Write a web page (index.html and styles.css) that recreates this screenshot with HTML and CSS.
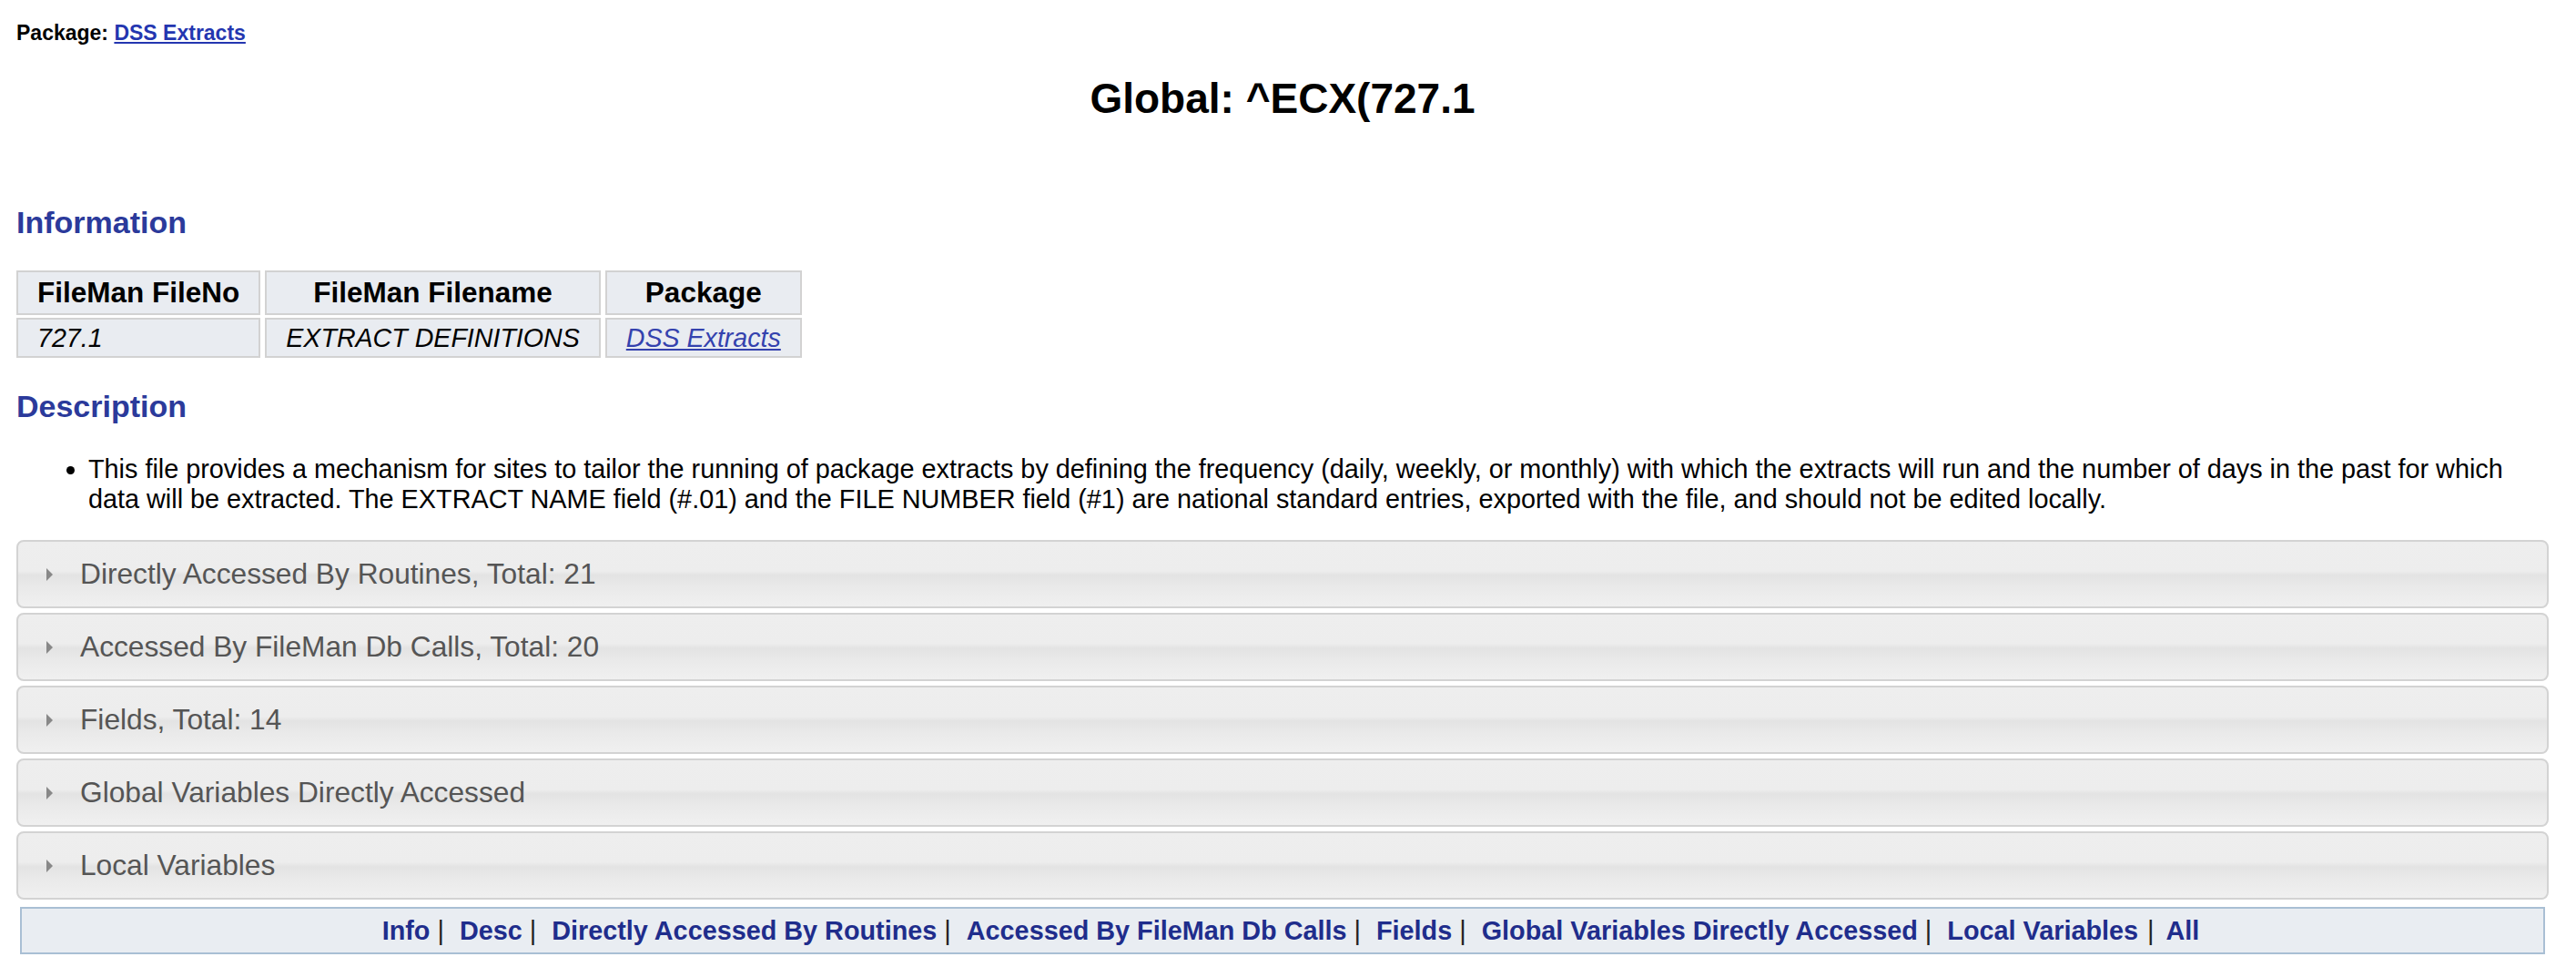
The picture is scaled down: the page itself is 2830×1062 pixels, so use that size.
FILE: index.html
```html
<!DOCTYPE html>
<html lang="en">
<head>
<meta charset="utf-8">
<title>Global: ^ECX(727.1</title>
<link rel="stylesheet" href="styles.css">
</head>
<body>
<div class="page">
  <div class="pkg"><span class="pkg-label">Package:</span> <a class="pkg-link" href="#">DSS Extracts</a></div>
  <h1 class="title">Global: ^ECX(727.1</h1>

  <h2 class="section section-info">Information</h2>
  <table class="info">
    <thead>
      <tr><th>FileMan FileNo</th><th>FileMan Filename</th><th>Package</th></tr>
    </thead>
    <tbody>
      <tr><td class="left">727.1</td><td>EXTRACT DEFINITIONS</td><td><a href="#">DSS Extracts</a></td></tr>
    </tbody>
  </table>

  <h2 class="section section-desc">Description</h2>
  <ul class="desc">
    <li>This file provides a mechanism for sites to tailor the running of package extracts by defining the frequency (daily, weekly, or monthly) with which the extracts will run and the number of days in the past for which data will be extracted. The EXTRACT NAME field (#.01) and the FILE NUMBER field (#1) are national standard entries, exported with the file, and should not be edited locally.</li>
  </ul>

  <div class="accordion">
    <div class="acc-head"><span class="tri"></span><span class="acc-text">Directly Accessed By Routines, Total: 21</span></div>
    <div class="acc-head"><span class="tri"></span><span class="acc-text">Accessed By FileMan Db Calls, Total: 20</span></div>
    <div class="acc-head"><span class="tri"></span><span class="acc-text">Fields, Total: 14</span></div>
    <div class="acc-head"><span class="tri"></span><span class="acc-text">Global Variables Directly Accessed</span></div>
    <div class="acc-head"><span class="tri"></span><span class="acc-text">Local Variables</span></div>
  </div>

  <div class="nav">
    <a href="#">Info</a><span class="sep">|</span> <a href="#">Desc</a><span class="sep">|</span> <a href="#">Directly Accessed By Routines</a><span class="sep">|</span> <a href="#">Accessed By FileMan Db Calls</a><span class="sep">|</span> <a href="#">Fields</a><span class="sep">|</span> <a href="#">Global Variables Directly Accessed</a><span class="sep">|</span> <a href="#">Local Variables</a> <span class="sep sep-last">|</span><a href="#">All</a>
  </div>
</div>
</body>
</html>
```

FILE: styles.css
```css
html, body {
  margin: 0;
  padding: 0;
  background: #ffffff;
}

body {
  font-family: "Liberation Sans", Arial, sans-serif;
  color: #000;
}

.page {
  padding: 23px 30px 0 18px;
}

.pkg {
  font-size: 23px;
  line-height: 26px;
  font-weight: bold;
}

.pkg-link {
  color: #2436b0;
  text-decoration: underline;
}

.title {
  margin: 32px 0 0 0;
  font-size: 46px;
  line-height: 54px;
  font-weight: bold;
  text-align: center;
}

.section {
  font-size: 34px;
  line-height: 40px;
  font-weight: bold;
  color: #2b3a9b;
  margin: 0;
}

.section-info {
  margin-top: 89px;
}

.info {
  margin: 30px 0 0 -5px;
  border-collapse: separate;
  border-spacing: 5px 3px;
}

.info th,
.info td {
  background: #e9ecf1;
  border: 2px solid #d2d2d2;
  padding: 4px 21px;
  text-align: center;
}

.info th {
  font-size: 31.5px;
  line-height: 37px;
  font-weight: bold;
}

.info td {
  font-size: 28.6px;
  line-height: 32px;
  font-style: italic;
}

.info td.left {
  text-align: left;
}

.info td a {
  color: #3442ae;
  text-decoration: underline;
}

.section-desc {
  margin-top: 30px;
}

.desc {
  margin: 33px 0 0 0;
  padding-left: 79px;
  padding-right: 20px;
  font-size: 28.8px;
  line-height: 32.5px;
}

.accordion {
  margin-top: 29px;
  display: flex;
  flex-direction: column;
  gap: 5px;
}

.acc-head {
  height: 75px;
  box-sizing: border-box;
  border: 2px solid #d3d3d3;
  border-radius: 8px;
  background: linear-gradient(to bottom, #eeeeee 0%, #ededed 45%, #e3e3e3 52%, #e9e9e9 68%, #f0f0f0 100%);
  display: flex;
  align-items: center;
  color: #555555;
  font-size: 31.7px;
}

.tri {
  width: 0;
  height: 0;
  border-top: 7px solid transparent;
  border-bottom: 7px solid transparent;
  border-left: 7px solid #888888;
  margin-left: 31px;
  margin-right: 30px;
}

.nav {
  margin: 8px 4px 0 4px;
  height: 52px;
  box-sizing: border-box;
  border: 2px solid #a9bfd4;
  background: #e9edf2;
  display: flex;
  align-items: center;
  justify-content: center;
  padding-left: 18px;
  font-size: 28.8px;
  font-weight: bold;
  white-space: pre;
}

.nav a {
  color: #1f2d8c;
  text-decoration: none;
}

.nav .sep {
  font-weight: normal;
  color: #222;
  margin: 0 17px 0 8px;
}

.nav .sep-last {
  margin: 0 13px 0 10px;
}
```
